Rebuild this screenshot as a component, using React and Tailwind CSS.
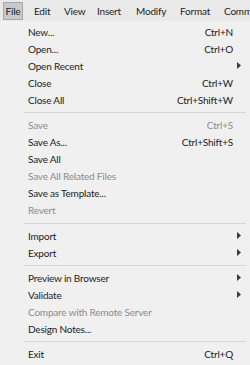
import React from "react";

const F = { fontFamily: 'Lato, "Noto Sans", sans-serif' };

function Arrow() {
  return (
    <svg width="4" height="7" viewBox="0 0 4 7" className="block">
      <path d="M0 0 L4 3.5 L0 7 Z" fill="#3a3a3a" />
    </svg>
  );
}

function Item({ label, shortcut, disabled, sub }) {
  return (
    <div className={`flex items-center h-[17.1px] pl-[28px] pr-[17px] ${disabled ? "text-[#8c8c8c]" : "text-[#1c1c1c]"}`}>
      <span className="flex-1 whitespace-nowrap">{label}</span>
      {shortcut && <span className="whitespace-nowrap">{shortcut}</span>}
      {sub && <span className="mr-[-8px]"><Arrow /></span>}
    </div>
  );
}

function Sep() {
  return (
    <div className="h-[8px] flex items-center pl-[24px] pr-[4px]">
      <div className="w-full h-[1px] bg-[#d6d6d6]" />
    </div>
  );
}

export default function App() {
  return (
    <div className="w-[250px] h-[365px] overflow-hidden bg-[#f0f0f0] text-[10px] tracking-[-0.2px] leading-none" style={F}>
      <div className="h-[21px] bg-[#e9e9e9] flex items-center pl-[3px] text-[#222] whitespace-nowrap overflow-hidden">
        <div className="shrink-0 h-[18px] w-[20px] justify-center flex items-center bg-[#c9c9c9] border border-[#a8a8a8]">File</div>
        <div className="shrink-0 ml-[11px] w-[30px]">Edit</div>
        <div className="shrink-0 w-[33px]">View</div>
        <div className="shrink-0 w-[39px]">Insert</div>
        <div className="shrink-0 w-[44px]">Modify</div>
        <div className="shrink-0 w-[44px]">Format</div>
        <div className="shrink-0">Commands</div>
      </div>
      <div className="pt-[2px]">
        <Item label="New..." shortcut="Ctrl+N" />
        <Item label="Open..." shortcut="Ctrl+O" />
        <Item label="Open Recent" sub />
        <Item label="Close" shortcut="Ctrl+W" />
        <Item label="Close All" shortcut="Ctrl+Shift+W" />
        <Sep />
        <Item label="Save" shortcut="Ctrl+S" disabled />
        <Item label="Save As..." shortcut="Ctrl+Shift+S" />
        <Item label="Save All" />
        <Item label="Save All Related Files" disabled />
        <Item label="Save as Template..." />
        <Item label="Revert" disabled />
        <Sep />
        <Item label="Import" sub />
        <Item label="Export" sub />
        <Sep />
        <Item label="Preview in Browser" sub />
        <Item label="Validate" sub />
        <Item label="Compare with Remote Server" disabled />
        <Item label="Design Notes..." />
        <Sep />
        <Item label="Exit" shortcut="Ctrl+Q" />
      </div>
    </div>
  );
}
